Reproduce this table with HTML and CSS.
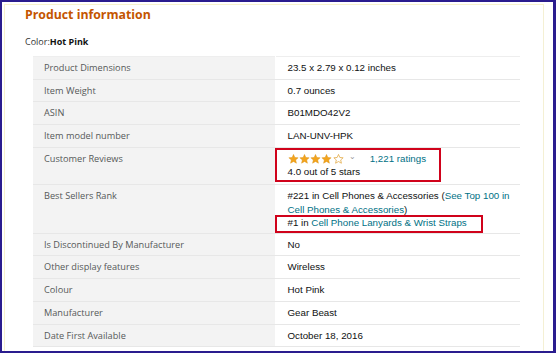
FILE: index.html
```html
<!DOCTYPE html>
<html>
<head>
<meta charset="utf-8">
<link rel="stylesheet" href="styles.css">
</head>
<body>
<div class="frame">
  <div class="inner">
    <h2 class="title">Product information</h2>
    <div class="color-line">Color:<b>Hot Pink</b></div>
    <table class="specs">
      <tr><th>Product Dimensions</th><td>23.5 x 2.79 x 0.12 inches</td></tr>
      <tr><th>Item Weight</th><td>0.7 ounces</td></tr>
      <tr><th>ASIN</th><td>B01MDO42V2</td></tr>
      <tr><th>Item model number</th><td>LAN-UNV-HPK</td></tr>
      <tr class="tall"><th>Customer Reviews</th><td class="mark">
        <div class="stars-line">
          <span class="stars">
            <svg width="11" height="10" viewBox="0 0 24 23"><path d="M12 1l3.1 7 7.6.7-5.7 5 1.7 7.5L12 17.3 5.3 21.2 7 13.7l-5.7-5L8.9 8z" fill="#f3a41d" stroke="#d98f10" stroke-width="1"/></svg><svg width="11" height="10" viewBox="0 0 24 23"><path d="M12 1l3.1 7 7.6.7-5.7 5 1.7 7.5L12 17.3 5.3 21.2 7 13.7l-5.7-5L8.9 8z" fill="#f3a41d" stroke="#d98f10" stroke-width="1"/></svg><svg width="11" height="10" viewBox="0 0 24 23"><path d="M12 1l3.1 7 7.6.7-5.7 5 1.7 7.5L12 17.3 5.3 21.2 7 13.7l-5.7-5L8.9 8z" fill="#f3a41d" stroke="#d98f10" stroke-width="1"/></svg><svg width="11" height="10" viewBox="0 0 24 23"><path d="M12 1l3.1 7 7.6.7-5.7 5 1.7 7.5L12 17.3 5.3 21.2 7 13.7l-5.7-5L8.9 8z" fill="#f3a41d" stroke="#d98f10" stroke-width="1"/></svg><svg width="11" height="10" viewBox="0 0 24 23"><path d="M12 1l3.1 7 7.6.7-5.7 5 1.7 7.5L12 17.3 5.3 21.2 7 13.7l-5.7-5L8.9 8z" fill="none" stroke="#e0a030" stroke-width="1.6"/></svg>
          </span>
          <span class="caret">&#8964;</span>
          <a class="link">1,221 ratings</a>
        </div>
        <div>4.0 out of 5 stars</div>
        <span class="redbox box1"></span>
      </td></tr>
      <tr class="taller"><th>Best Sellers Rank</th><td class="mark">
        <div>#221 in Cell Phones &amp; Accessories (<a class="link">See Top 100 in</a></div>
        <div><a class="link">Cell Phones &amp; Accessories</a>)</div>
        <div>#1 in <a class="link">Cell Phone Lanyards &amp; Wrist Straps</a></div>
        <span class="redbox box2"></span>
      </td></tr>
      <tr><th>Is Discontinued By Manufacturer</th><td>No</td></tr>
      <tr><th>Other display features</th><td>Wireless</td></tr>
      <tr><th>Colour</th><td>Hot Pink</td></tr>
      <tr><th>Manufacturer</th><td>Gear Beast</td></tr>
      <tr><th>Date First Available</th><td>October 18, 2016</td></tr>
    </table>
  </div>
</div>
</body>
</html>
```
FILE: styles.css
```css
html, body {
  margin: 0;
  padding: 0;
  background: #ffffff;
}
.frame {
  width: 556px;
  height: 353px;
  box-sizing: border-box;
  border: 2px solid #2a1c8e;
  border-right-width: 3px;
  padding: 2px 9px 0 2px;
  overflow: hidden;
}
.inner {
  height: 100%;
  box-sizing: border-box;
  border-top: 1px solid #f7f2cc;
  border-left: 1px solid #f7f2cc;
  border-right: 1px solid #f4f0d4;
  padding: 1px 0 0 20px;
}
.title {
  margin: 0;
  font-family: "Open Sans", "Noto Sans", sans-serif;
  font-size: 12.3px;
  font-weight: 700;
  color: #c45500;
  line-height: 18px;
  height: 18px;
}
.color-line {
  margin-top: 12px;
  font-family: "Open Sans", "Noto Sans", sans-serif;
  font-size: 9px;
  color: #333;
  line-height: 12px;
}
.color-line b {
  color: #111;
}
.specs {
  margin-top: 8px;
  margin-left: 8px;
  border-collapse: collapse;
  width: 487px;
  table-layout: fixed;
  border-top: 1px solid #eeeeee;
}
.specs tr {
  height: 22.7px;
}
.specs th, .specs td {
  vertical-align: top;
  border-bottom: 1px solid #e7e7e7;
  padding: 4px 4px 3px 11px;
  line-height: 13.5px;
  text-align: left;
}
.specs th {
  width: 242px;
  box-sizing: border-box;
  background: #f3f3f3;
  font-family: "Open Sans", "Noto Sans", sans-serif;
  font-size: 9.2px;
  font-weight: 400;
  color: #565959;
}
.specs td {
  font-family: "Liberation Sans", Arial, sans-serif;
  font-size: 9.75px;
  color: #0f1111;
  padding-left: 12px;
  border-left: 1px solid #ffffff;
}
.specs tr.tall {
  height: 37.5px;
}
.specs tr.taller {
  height: 48.5px;
}
.mark {
  position: relative;
}
.stars-line {
  display: flex;
  align-items: center;
  height: 13.5px;
}
.stars {
  display: inline-flex;
  gap: 0.3px;
}
.stars svg {
  display: block;
}
.caret {
  color: #999;
  margin-left: 5px;
  font-size: 8px;
  line-height: 8px;
  position: relative;
  top: -2px;
}
.stars-line .link {
  margin-left: 14px;
}
.link {
  color: #007185;
  text-decoration: none;
}
.redbox {
  position: absolute;
  border: 2px solid #d0021b;
  box-sizing: border-box;
  pointer-events: none;
}
.box1 {
  left: -1px;
  top: 0;
  width: 166px;
  height: 34px;
}
.box2 {
  left: -1px;
  top: 30px;
  width: 208px;
  height: 18px;
}
```
